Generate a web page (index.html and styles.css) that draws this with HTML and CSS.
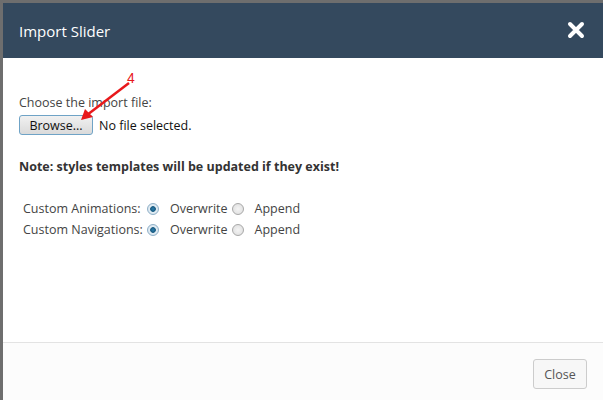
FILE: index.html
```html
<!DOCTYPE html>
<html>
<head>
<meta charset="utf-8">
<link rel="stylesheet" href="styles.css">
</head>
<body>
<div class="frame">
  <div class="dialog">
    <div class="header">
      <span class="title">Import Slider</span>
      <svg class="close-x" width="18" height="18" viewBox="0 0 18 18"><path d="M3 3 L15 15 M15 3 L3 15" stroke="#fff" stroke-width="4" stroke-linecap="round"/></svg>
    </div>
    <div class="body">
      <div class="choose">Choose the import file:</div>
      <div class="file-row">
        <span class="browse">Browse...</span>
        <span class="nofile">No file selected.</span>
      </div>
      <div class="note">Note: styles templates will be updated if they exist!</div>
      <div class="options">
        <span class="opt-label">Custom Animations:</span>
        <span class="choice"><span class="radio checked"></span><span class="radio-text">Overwrite</span></span>
        <span class="choice"><span class="radio"></span><span class="radio-text">Append</span></span>
        <span class="opt-label">Custom Navigations:</span>
        <span class="choice"><span class="radio checked"></span><span class="radio-text">Overwrite</span></span>
        <span class="choice"><span class="radio"></span><span class="radio-text">Append</span></span>
      </div>
      <div class="annot">
        <span class="annot-num">4</span>
        <svg class="arrow" width="70" height="50" viewBox="0 0 70 50"><path d="M58 4 L16 36" stroke="#e8181b" stroke-width="2.4" fill="none"/><path d="M10 41 L14 30 L22 38 Z" fill="#e8181b"/></svg>
      </div>
    </div>
    <div class="footer">
      <span class="close-btn">Close</span>
    </div>
  </div>
</div>
</body>
</html>
```
FILE: styles.css
```css
html, body {
  margin: 0;
  padding: 0;
  width: 603px;
  height: 400px;
  overflow: hidden;
  background: #6e6e6e;
}
.frame {
  padding: 3px 0 0 3px;
  height: 397px;
}
.dialog {
  display: flex;
  flex-direction: column;
  height: 397px;
  background: #fff;
  font-family: "Open Sans", "Noto Sans", sans-serif;
  color: #333;
}
.header {
  height: 55px;
  background: #34495e;
  display: flex;
  align-items: center;
  justify-content: space-between;
  padding: 0 18px 0 16px;
  flex-shrink: 0;
}
.title {
  color: #fff;
  font-size: 15px;
  margin-top: 1px;
}
.close-x {
  margin-top: -2px;
}
.body {
  flex: 1;
  position: relative;
  padding: 37px 16px 0 16px;
  font-size: 12.5px;
}
.choose {
  color: #444;
  line-height: 16px;
}
.file-row {
  display: flex;
  align-items: center;
  margin-top: 4px;
}
.browse {
  box-sizing: border-box;
  width: 74px;
  height: 20px;
  border: 1px solid #6fa3c6;
  border-radius: 3px;
  background: linear-gradient(#f1f1f1, #dadada);
  color: #111;
  display: flex;
  align-items: center;
  justify-content: center;
  font-size: 12.5px;
}
.nofile {
  margin-left: 6px;
  color: #111;
}
.note {
  margin-top: 23px;
  font-weight: bold;
  color: #333;
}
.options {
  margin-top: 23px;
  padding-left: 4px;
  color: #444;
  display: grid;
  grid-template-columns: 124px auto auto;
  justify-content: start;
  grid-auto-rows: 21px;
  align-items: center;
}
.choice {
  display: flex;
  align-items: center;
}
.radio {
  box-sizing: border-box;
  width: 12px;
  height: 12px;
  border-radius: 50%;
  border: 1px solid #a8a8a8;
  background: radial-gradient(circle, #f4f4f4 0%, #dcdcdc 100%);
  margin-right: 11px;
}
.radio.checked {
  border-color: #8fb0c8;
  background: radial-gradient(circle, #2a80b0 0%, #1a5a80 35%, #e3eef5 45%, #cfdce6 100%);
}
.radio-text {
  margin-right: 4px;
}
.annot {
  position: absolute;
  left: 68px;
  top: 16px;
  width: 80px;
  height: 60px;
}
.annot-num {
  position: absolute;
  left: 56px;
  top: -4px;
  color: #e8181b;
  font-family: "Liberation Sans", sans-serif;
  font-size: 14px;
}
.arrow {
  position: absolute;
  left: 0;
  top: 5px;
}
.footer {
  height: 58px;
  border-top: 1px solid #e3e3e3;
  background: #fcfcfc;
  display: flex;
  justify-content: flex-end;
  align-items: flex-start;
  padding: 16px 16px 0 0;
  flex-shrink: 0;
  box-sizing: border-box;
}
.close-btn {
  box-sizing: border-box;
  width: 54px;
  height: 30px;
  border: 1px solid #ccc;
  border-radius: 3px;
  background: #f7f7f7;
  display: flex;
  align-items: center;
  justify-content: center;
  font-size: 12.5px;
  color: #555;
}
```
